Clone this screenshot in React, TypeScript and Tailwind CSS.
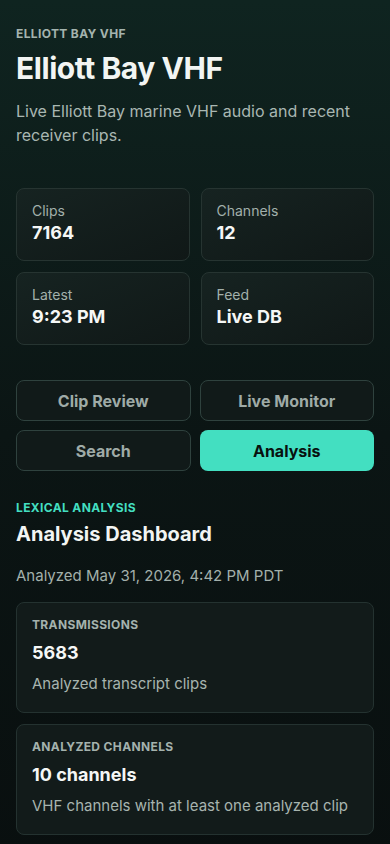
export default function App() {
  const stats = [
    { label: "Clips", value: "7164" },
    { label: "Channels", value: "12" },
    { label: "Latest", value: "9:23 PM" },
    { label: "Feed", value: "Live DB" },
  ];

  const tabs = [
    { label: "Clip Review", active: false },
    { label: "Live Monitor", active: false },
    { label: "Search", active: false },
    { label: "Analysis", active: true },
  ];

  const metrics = [
    { label: "TRANSMISSIONS", value: "5683", note: "Analyzed transcript clips" },
    { label: "ANALYZED CHANNELS", value: "10 channels", note: "VHF channels with at least one analyzed clip" },
  ];

  return (
    <div
      className="min-h-screen bg-gradient-to-b from-[#0f2420] via-[#0b1514] to-[#090f0f] text-[#f2f5f3] px-4 pt-[26px] pb-8"
      style={{ fontFamily: "Inter, 'Noto Sans', sans-serif" }}
    >
      <header>
        <p className="text-[12px] leading-[16px] font-bold tracking-[0.03em] text-[#a4b3ae]">ELLIOTT BAY VHF</p>
        <h1 className="mt-[8px] text-[30px] leading-[36px] font-bold tracking-[-0.015em]">Elliott Bay VHF</h1>
        <p className="mt-[13px] text-[16px] leading-[24px] text-[#a9b7b2]">
          Live Elliott Bay marine VHF audio and recent receiver clips.
        </p>
      </header>

      <section className="mt-[41px] grid grid-cols-2 gap-[11px]">
        {stats.map((s) => (
          <div
            key={s.label}
            className="h-[73px] rounded-[8px] border border-[#263431] bg-gradient-to-br from-[#162321] to-[#101817] px-[15px] pt-[13px]"
          >
            <p className="text-[14px] leading-[18px] text-[#a2b0ab]">{s.label}</p>
            <p className="mt-[2px] text-[18px] leading-[22px] font-bold text-[#f5f7f6]">{s.value}</p>
          </div>
        ))}
      </section>

      <nav className="mt-[35px] grid grid-cols-2 gap-[9px]">
        {tabs.map((t) => (
          <button
            key={t.label}
            className={
              t.active
                ? "h-[41px] rounded-[8px] bg-[#43dfc1] text-[16px] font-bold text-[#08110f]"
                : "h-[41px] rounded-[8px] border border-[#2f423e] bg-[#111a19] text-[16px] font-bold text-[#9fabA7]"
            }
          >
            {t.label}
          </button>
        ))}
      </nav>

      <section className="mt-[29px]">
        <p className="text-[12px] leading-[16px] font-bold tracking-[0.03em] text-[#43dfc1]">LEXICAL ANALYSIS</p>
        <h2 className="mt-[5px] text-[20px] leading-[26px] font-bold">Analysis Dashboard</h2>
        <p className="mt-[19px] text-[15px] leading-[20px] text-[#a3b0ab]">Analyzed May 31, 2026, 4:42 PM PDT</p>

        <div className="mt-[16px] flex flex-col gap-[11px]">
          {metrics.map((m) => (
            <div
              key={m.label}
              className="h-[111px] rounded-[8px] border border-[#243230] bg-[#121b1a] px-[15px] pt-[14px]"
            >
              <p className="text-[12px] leading-[16px] font-bold tracking-[0.03em] text-[#a4b2ad]">{m.label}</p>
              <p className="mt-[9px] text-[18px] leading-[22px] font-bold text-[#f5f7f6]">{m.value}</p>
              <p className="mt-[10px] text-[15px] leading-[20px] text-[#a7b4af]">{m.note}</p>
            </div>
          ))}
        </div>
      </section>
    </div>
  );
}
